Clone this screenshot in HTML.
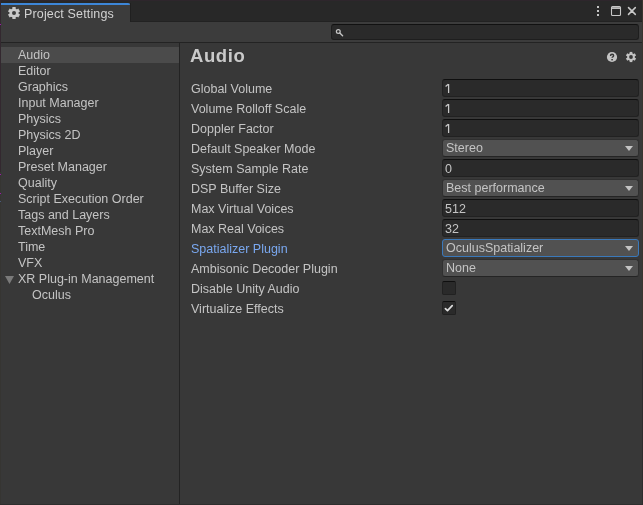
<!DOCTYPE html>
<html><head><meta charset="utf-8">
<style>
*{margin:0;padding:0;box-sizing:border-box}
html,body{width:643px;height:505px;overflow:hidden;background:#383838}
body{position:relative;font-family:"Liberation Sans",sans-serif;font-size:12.5px;color:#c4c4c4}
.a{position:absolute}
.t{position:absolute;white-space:nowrap;line-height:16px;will-change:transform}
#lcol{left:0;top:0;width:1px;height:505px;background:#363532}
#lcoltop{left:0;top:0;width:1px;height:172px;background:#33282f}
#row0{left:0;top:0;width:643px;height:1px;background:#2e262c}
#tabbar{left:1px;top:1px;width:642px;height:21px;background:#282828}
#tab{left:1px;top:3px;width:129px;height:19px;background:#3c3c3c}
#tabedge{left:130px;top:3px;width:1px;height:19px;background:#202020}
#tabline{left:1px;top:3px;width:129px;height:2px;background:#3d86d8;border-top-right-radius:2px}
#toolbar{left:1px;top:22px;width:642px;height:20px;background:#3c3c3c}
#hsep{left:1px;top:42px;width:642px;height:1px;background:#232323}
#vsep{left:179px;top:43px;width:1px;height:462px;background:#232323}
#rcol{left:642px;top:0;width:1px;height:350px;background:#39352f}
#rcol2{left:642px;top:350px;width:1px;height:155px;background:#2d2d2d}
#brow{left:0;top:504px;width:643px;height:1px;background:#2e2e2e}
#search{left:331px;top:24px;width:308px;height:16px;background:#2a2a2a;border:1px solid #1e1e1e;border-top-color:#111;border-radius:3px}
#sel{left:1px;top:47px;width:178px;height:16px;background:#4b4b4b}
.li{left:18px}
.lab{left:191px}
.fld{position:absolute;left:442px;width:197px;height:18px;background:#2a2a2a;border:1px solid #212121;border-top-color:#0f0f0f;border-radius:3px}
.fld span{position:absolute;left:2px;top:1px;line-height:16px;will-change:transform}
.dd{position:absolute;left:442px;width:197px;height:18px;background:#515151;border:1px solid #303030;border-bottom-color:#242424;border-radius:3px}
.dd span{position:absolute;left:3px;top:0;line-height:16px;will-change:transform}
.dd i{position:absolute;right:5px;top:6px;width:0;height:0;border-left:4px solid transparent;border-right:4px solid transparent;border-top:5px solid #c4c4c4}
.cb{position:absolute;left:442px;width:14px;height:14px;background:#2a2a2a;border:1px solid #212121;border-top-color:#0f0f0f;border-radius:2px}
</style></head><body>
<div class="a" id="row0"></div>
<div class="a" id="tabbar"></div>
<div class="a" id="lcol"></div>
<div class="a" id="lcoltop"></div>
<div class="a" style="left:0;top:24px;width:1px;height:1px;background:#9a1aa8"></div><div class="a" style="left:0;top:174px;width:1px;height:1px;background:#9a1aa8"></div><div class="a" style="left:0;top:193px;width:1px;height:1px;background:#9a1aa8"></div><div class="a" style="left:0;top:201px;width:1px;height:1px;background:#4a5a7a"></div>
<div class="a" id="tab"></div>
<div class="a" id="tabedge"></div>
<div class="a" id="tabline"></div>
<svg class="a" style="left:8px;top:7px" width="12" height="12" viewBox="0 0 12 12" fill="#c8c8c8" stroke="#c8c8c8">
<circle cx="6" cy="6" r="4.5" stroke="none"/>
<g stroke-width="3.3" stroke-linecap="butt"><line x1="6" y1="6" x2="6.00" y2="0.00"/><line x1="6" y1="6" x2="11.20" y2="3.00"/><line x1="6" y1="6" x2="11.20" y2="9.00"/><line x1="6" y1="6" x2="6.00" y2="12.00"/><line x1="6" y1="6" x2="0.80" y2="9.00"/><line x1="6" y1="6" x2="0.80" y2="3.00"/></g>
<circle cx="6" cy="6" r="2" fill="#3c3c3c" stroke="none"/>
</svg>
<div class="t" style="left:24px;top:6px;color:#d2d2d2;letter-spacing:0.15px">Project Settings</div>
<!-- window controls -->
<svg class="a" style="left:590px;top:2px" width="53" height="20" viewBox="0 0 53 20">
<rect x="7" y="4" width="2" height="2" fill="#c4c4c4"/>
<rect x="7" y="8" width="2" height="2" fill="#c4c4c4"/>
<rect x="7" y="12" width="2" height="2" fill="#c4c4c4"/>
<rect x="21.5" y="4.5" width="9" height="9" rx="1" fill="none" stroke="#c8c8c8" stroke-width="1.1"/>
<rect x="22" y="5" width="8" height="1" fill="#a4a4a4"/>
<rect x="22" y="6" width="8" height="1" fill="#c0c0c0"/>
<path d="M38.5 5.6 L45.3 12.4 M45.3 5.6 L38.5 12.4" stroke="#c8c8c8" stroke-width="1.5" stroke-linecap="round"/>
</svg>
<div class="a" id="toolbar"></div>
<div class="a" style="left:131px;top:21px;width:512px;height:1px;background:#222"></div>
<div class="a" id="search"></div>
<svg class="a" style="left:334px;top:27px" width="12" height="12" viewBox="0 0 12 12">
<circle cx="4.3" cy="4.4" r="1.9" fill="none" stroke="#c4c4c4" stroke-width="1.25"/>
<path d="M5.8 5.9 L8.6 8.7" stroke="#c4c4c4" stroke-width="1.4" stroke-linecap="round"/>
</svg>
<div class="a" id="hsep"></div>
<div class="a" id="vsep"></div>
<div class="a" id="rcol"></div><div class="a" id="rcol2"></div>
<div class="a" id="brow"></div>
<div class="a" id="sel"></div>
<div class="t li" style="top:47px">Audio</div>
<div class="t li" style="top:63px">Editor</div>
<div class="t li" style="top:79px">Graphics</div>
<div class="t li" style="top:95px">Input Manager</div>
<div class="t li" style="top:111px">Physics</div>
<div class="t li" style="top:127px">Physics 2D</div>
<div class="t li" style="top:143px">Player</div>
<div class="t li" style="top:159px">Preset Manager</div>
<div class="t li" style="top:175px">Quality</div>
<div class="t li" style="top:191px">Script Execution Order</div>
<div class="t li" style="top:207px">Tags and Layers</div>
<div class="t li" style="top:223px">TextMesh Pro</div>
<div class="t li" style="top:239px">Time</div>
<div class="t li" style="top:255px">VFX</div>
<svg class="a" style="left:5px;top:276px" width="10" height="9" viewBox="0 0 10 9"><path d="M0 0 H9 L4.5 8 Z" fill="#7a7a7a"/></svg>
<div class="t li" style="top:271px">XR Plug-in Management</div>
<div class="t" style="left:32px;top:287px">Oculus</div>

<div class="t" style="left:190px;top:46px;font-size:18.5px;font-weight:bold;line-height:20px;letter-spacing:0.6px;color:#cacaca">Audio</div>
<svg class="a" style="left:606px;top:51px" width="32" height="12" viewBox="0 0 32 12">
<circle cx="6" cy="6" r="5.1" fill="#c4c4c4"/>
<path d="M4.5 5 Q4.5 3.3 6.1 3.3 Q7.6 3.3 7.6 4.6 Q7.6 5.4 6.8 5.9 Q6.1 6.3 6.1 6.8" fill="none" stroke="#383838" stroke-width="1.45"/>
<rect x="5.3" y="8" width="1.6" height="1.4" fill="#383838"/>
</svg>
<svg class="a" style="left:625px;top:51px" width="12" height="12" viewBox="0 0 12 12" fill="#c4c4c4" stroke="#c4c4c4">
<circle cx="6" cy="6" r="3.8" stroke="none"/>
<g stroke-width="2.7" stroke-linecap="butt"><line x1="6" y1="6" x2="6.00" y2="0.90"/><line x1="6" y1="6" x2="10.42" y2="3.45"/><line x1="6" y1="6" x2="10.42" y2="8.55"/><line x1="6" y1="6" x2="6.00" y2="11.10"/><line x1="6" y1="6" x2="1.58" y2="8.55"/><line x1="6" y1="6" x2="1.58" y2="3.45"/></g>
<circle cx="6" cy="6" r="1.9" fill="#383838" stroke="none"/>
</svg>

<div class="t lab" style="top:81px">Global Volume</div>
<div class="t lab" style="top:101px">Volume Rolloff Scale</div>
<div class="t lab" style="top:121px">Doppler Factor</div>
<div class="t lab" style="top:141px">Default Speaker Mode</div>
<div class="t lab" style="top:161px">System Sample Rate</div>
<div class="t lab" style="top:181px">DSP Buffer Size</div>
<div class="t lab" style="top:201px">Max Virtual Voices</div>
<div class="t lab" style="top:221px">Max Real Voices</div>
<div class="t lab" style="top:241px;color:#7aa8f0">Spatializer Plugin</div>
<div class="t lab" style="top:261px">Ambisonic Decoder Plugin</div>
<div class="t lab" style="top:281px">Disable Unity Audio</div>
<div class="t lab" style="top:301px">Virtualize Effects</div>

<div class="fld" style="top:79px"><svg style="position:absolute;left:0;top:0" width="12" height="18" viewBox="0 0 12 18"><path d="M2.6 6.4 L5.3 4.3 M5.6 4.1 V13" fill="none" stroke="#c8c8c8" stroke-width="1.25"/></svg></div>
<div class="fld" style="top:99px"><svg style="position:absolute;left:0;top:0" width="12" height="18" viewBox="0 0 12 18"><path d="M2.6 6.4 L5.3 4.3 M5.6 4.1 V13" fill="none" stroke="#c8c8c8" stroke-width="1.25"/></svg></div>
<div class="fld" style="top:119px"><svg style="position:absolute;left:0;top:0" width="12" height="18" viewBox="0 0 12 18"><path d="M2.6 6.4 L5.3 4.3 M5.6 4.1 V13" fill="none" stroke="#c8c8c8" stroke-width="1.25"/></svg></div>
<div class="dd" style="top:139px"><span>Stereo</span><i></i></div>
<div class="fld" style="top:159px"><span>0</span></div>
<div class="dd" style="top:179px"><span>Best performance</span><i></i></div>
<div class="fld" style="top:199px"><span>512</span></div>
<div class="fld" style="top:219px"><span>32</span></div>
<div class="dd" style="top:239px;border-color:#3a79bb"><span>OculusSpatializer</span><i></i></div>
<div class="dd" style="top:259px"><span>None</span><i></i></div>
<div class="cb" style="top:281px"></div>
<div class="cb" style="top:301px"></div>
<svg class="a" style="left:442px;top:301px" width="14" height="14" viewBox="0 0 14 14"><path d="M3.4 7.6 L5.5 9.6 L10.2 4.7" fill="none" stroke="#dedede" stroke-width="1.7" stroke-linecap="round" stroke-linejoin="round"/></svg>
</body></html>
